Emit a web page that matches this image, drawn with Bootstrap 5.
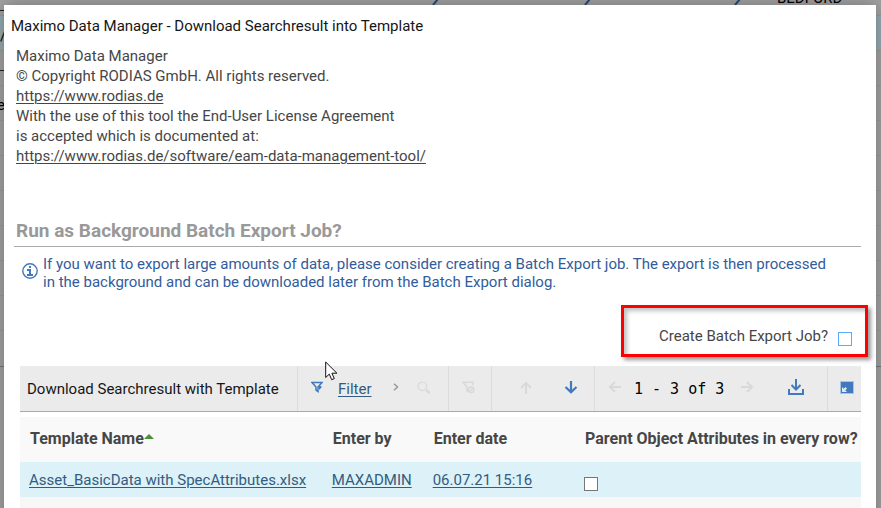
<!DOCTYPE html>
<html lang="en">
<head>
<meta charset="utf-8">
<meta name="viewport" content="width=device-width, initial-scale=1">
<title>Maximo Data Manager</title>
<link href="https://cdn.jsdelivr.net/npm/bootstrap@5.3.0/dist/css/bootstrap.min.css" rel="stylesheet">
<style>
  body { font-family: Roboto, "Noto Sans", sans-serif; font-size: 15px; line-height: 20px; color: #464646; background: #999; }
  a { color: #464646; text-underline-offset: 2px; text-decoration-thickness: 1px; }
  a:hover { color: #000; }
  .page-shell { padding: 5px 5px 0 4px; }
  .under-page { inset: 0; color: #000; background: #a2a2a2; }
  .under-page .strip { height: 35px; border-bottom: 1px solid #999; }
  .under-page .strip-first { height: 16px; }
  .under-page .strip-blue { background: #96abb2; }
  .under-page .strip-rule { height: 36px; border-bottom: 1px solid #777; }
  .under-text { position: absolute; line-height: 16px; }
  .u-bedford { left: 777px; top: -10px; }
  .u-slash { left: 0; top: 28px; }
  .u-e { left: -3px; top: 97px; }
  .u-chev { position: absolute; top: 0; }
  .u-c1 { left: 432px; } .u-c2 { left: 584px; } .u-c3 { left: 734px; }
  .u-line { position: absolute; left: 0; width: 4px; height: 1px; background: #222; }
  .u-l1 { top: 10px; } .u-l2 { top: 70px; }
  .dialog-box { background: #fff; min-height: calc(100vh - 5px); box-shadow: 0 0 16px rgba(0,0,0,.3); }
  .dialog-title { font-size: 15px; line-height: 20px; color: #161616; padding: 11px 7px 0; }
  .about { padding: 10px 12px 0; }
  .section-title { font-size: 19px; line-height: 24px; font-weight: 700; color: #999; margin: 53px 15px 0 10px; padding: 0 2px 3px; border-bottom: 1px solid #aaa; }
  .info { color: #325c9b; line-height: 18px; padding: 8px 24px 0 18px; gap: 5px; }
  .info svg { margin-top: 8px; }
  .job-box { border: 3px solid #f00; box-shadow: 3px 3px 4px rgba(0,0,0,.4), inset 3px 3px 4px rgba(0,0,0,.25); margin: 14px 8px 9px auto; width: 247px; height: 52px; padding: 9px 13px 0 0; gap: 10px; }
  .tick { appearance: none; width: 14px; height: 14px; border: 1px solid #777; background: #fff; margin: 0; flex: none; }
  .tick:checked { background: #4178be; }
  .job-box .tick { border-color: #5aaafa; margin-top: 6px; }
  .results { margin: 0 15px 0 16px; }
  .tools { background: #ebebeb; border-bottom: 1px solid #aaa; height: 46px; margin-bottom: 5px; color: #161616; }
  .tools > div { border-left: 1px solid #ddd; height: 45px; }
  .tools > .g-title { border-left: 0; padding-left: 7px; width: 277px; }
  .tools button { border: 0; background: none; padding: 0; line-height: 0; color: #4178be; }
  .tools button:disabled { color: #d9d9d9; }
  .tools svg { display: block; margin-bottom: 3px; }
  .g-filter { width: 151px; padding-left: 13px; }
  .g-filter a { color: #325c80; margin: 0 21px 0 15px; }
  .g-filter svg.sep { margin-right: 18px; }
  .g-clear { width: 43px; padding-right: 4px; } .g-nav { width: 103px; padding: 0 16px 0 27px; }
  .g-close { width: 34px; padding-left: 12px; }
  .g-page { padding: 0 23px 0 13px; }
  .page-count { font: 15px/20px "DejaVu Sans Mono", monospace; color: #000; margin: 0 17px 0 13px; white-space: pre; }
  .results table { table-layout: fixed; width: 100%; border-collapse: collapse; }
  .results th { background: #f9f9f9; height: 45px; padding: 0 0 1px 10px; font-size: 16px; font-weight: 700; white-space: nowrap; }
  .results td { background: #f7f7f7; height: 35px; padding: 0 0 0 9px; white-space: nowrap; }
  .results .picked td { background: #ddf1f8; }
  .results td a { color: #325c80; }
  .results td .tick { display: block; margin-top: 8px; }
  .sort { display: inline-block; border: 5px solid transparent; border-top: 0; border-bottom-color: #4b8f3c; vertical-align: 5px; }
  .c1 { width: 36%; } .c2 { width: 12%; } .c3 { width: 18%; } .c4 { width: 34%; }
  .pointer { position: absolute; left: 325px; top: 361px; }
</style>
<script src="https://cdn.jsdelivr.net/npm/bootstrap@5.3.0/dist/js/bootstrap.bundle.min.js"></script>
</head>
<body class="vh-100 overflow-hidden position-relative">

<div class="under-page position-absolute overflow-hidden" aria-hidden="true">
  <div class="strip strip-first"></div>
  <div class="strip strip-blue"></div>
  <div class="strip"></div><div class="strip"></div><div class="strip"></div><div class="strip"></div>
  <div class="strip"></div><div class="strip"></div><div class="strip"></div>
  <div class="strip"></div>
  <div class="strip strip-rule"></div>
  <span class="under-text u-bedford">BEDFORD</span>
  <span class="under-text u-slash">/</span>
  <span class="under-text u-e">e</span>
  <i class="u-line u-l1"></i><i class="u-line u-l2"></i>
  <svg class="u-chev u-c1" width="8" height="5"><path d="M1 5 6-1" stroke="#264a7c" stroke-width="2"/></svg>
  <svg class="u-chev u-c2" width="8" height="5"><path d="M1 5 6-1" stroke="#264a7c" stroke-width="2"/></svg>
  <svg class="u-chev u-c3" width="8" height="5"><path d="M1 5 6-1" stroke="#264a7c" stroke-width="2"/></svg>
</div>

<div class="page-shell position-relative">
<main class="dialog-box">
  <h1 class="dialog-title m-0 fw-normal">Maximo Data Manager - Download Searchresult into Template</h1>

  <div class="about">
    Maximo Data Manager<br>
    © Copyright RODIAS GmbH. All rights reserved.<br>
    <a href="https://www.rodias.de">https://www.rodias.de</a><br>
    With the use of this tool the End-User License Agreement<br>
    is accepted which is documented at:<br>
    <a href="https://www.rodias.de/software/eam-data-management-tool/">https://www.rodias.de/software/eam-data-management-tool/</a>
  </div>

  <h2 class="section-title">Run as Background Batch Export Job?</h2>

  <div class="info d-flex align-items-start">
    <svg class="flex-shrink-0" width="16" height="16" viewBox="0 0 16 16" fill="none" stroke="#4178be"><circle cx="8" cy="8" r="7.2" stroke-width="1.4"/><path d="M7 3h2v2H7zM5 6h4v5h2v2H5v-2h2V8H5z" fill="#4178be" stroke="none"/></svg>
    <div>If you want to export large amounts of data, please consider creating a Batch Export job. The export is then processed<br>in the background and can be downloaded later from the Batch Export dialog.</div>
  </div>

  <div class="job-box d-flex align-items-center justify-content-end">
    <label for="batchJob">Create Batch Export Job?</label>
    <input class="tick" type="checkbox" id="batchJob">
  </div>

  <section class="results">
    <div class="tools d-flex">
      <div class="g-title d-flex align-items-center text-nowrap">Download Searchresult with Template</div>
      <div class="g-filter d-flex align-items-center">
        <button type="button" aria-label="Filter table"><svg width="12" height="12" viewBox="0 0 12 12" fill="none" stroke="currentColor" stroke-width="1.5"><path d="M1 1.5h10L7 6v4.5L5 9V6z"/><path d="M8 4v5l3-3z" fill="currentColor" stroke="none"/></svg></button>
        <a href="#filter">Filter</a>
        <svg class="sep" width="6" height="8" viewBox="0 0 6 8" fill="none" stroke="#999" stroke-width="1.5"><path d="M1 .7 4.5 4 1 7.3"/></svg>
        <button type="button" disabled aria-label="Search"><svg width="13" height="13" viewBox="0 0 13 13" fill="none" stroke="currentColor" stroke-width="1.2"><circle cx="5.3" cy="5.3" r="4.3"/><path d="m9 9 3.5 3" stroke-width="2.5"/></svg></button>
      </div>
      <div class="g-clear d-flex align-items-center justify-content-center">
        <button type="button" disabled aria-label="Clear filter"><svg width="13" height="13" viewBox="0 0 13 13" fill="none" stroke="currentColor" stroke-width="1.5"><path d="M11 4V1.2H1L5 6v5"/><circle cx="9" cy="8.8" r="2.8"/><path d="m7 11 4-4"/></svg></button>
      </div>
      <div class="g-nav d-flex align-items-center justify-content-between">
        <button type="button" disabled aria-label="Previous row"><svg width="14" height="13" viewBox="0 0 14 13" fill="none" stroke="currentColor" stroke-width="2"><path d="M7 13V2M2 7l5-5 5 5"/></svg></button>
        <button type="button" aria-label="Next row"><svg width="14" height="13" viewBox="0 0 14 13" fill="none" stroke="currentColor" stroke-width="2.2"><path d="M7 0v11M1.5 6 7 11.3 12.500 6"/></svg></button>
      </div>
      <div class="g-page d-flex align-items-center flex-grow-1">
        <button type="button" disabled aria-label="Previous page"><svg width="13" height="12" viewBox="0 0 13 12" fill="none" stroke="currentColor" stroke-width="2"><path d="M13 6H2M7 1 2 6l5 5"/></svg></button>
        <span class="page-count">1 - 3 of 3</span>
        <button type="button" disabled aria-label="Next page"><svg width="13" height="12" viewBox="0 0 13 12" fill="none" stroke="currentColor" stroke-width="2"><path d="M0 6h11M6 1l5 5-5 5"/></svg></button>
        <button type="button" class="ms-auto" aria-label="Download"><svg width="16" height="16" viewBox="0 0 16 16" fill="none" stroke="currentColor" stroke-width="2"><path d="M8 0v10M3.500 6 8 10.500 12.500 6M1 10v5h14v-5"/></svg></button>
      </div>
      <div class="g-close d-flex align-items-center">
        <button type="button" aria-label="Collapse"><svg width="14" height="13" viewBox="0 0 14 13"><path d="M0 0h14v13H0z" fill="#a9c3e4"/><path d="M1 1h12v11H1z" fill="#4178be"/><path d="M2 6v5h5L5.300 9.300 7 7.500 5.500 6 3.700 7.700z" fill="#dce9f7"/></svg></button>
      </div>
    </div>

    <table>
      <thead>
        <tr>
          <th class="c1" scope="col">Template Name<span class="sort"></span></th>
          <th class="c2" scope="col">Enter by</th>
          <th class="c3" scope="col">Enter date</th>
          <th class="c4" scope="col" id="parentCol">Parent Object Attributes in every row?</th>
        </tr>
      </thead>
      <tbody>
        <tr class="picked">
          <td><a href="#template">Asset_BasicData with SpecAttributes.xlsx</a></td>
          <td><a href="#user">MAXADMIN</a></td>
          <td><a href="#date">06.07.21 15:16</a></td>
          <td><input class="tick" type="checkbox" aria-labelledby="parentCol"></td>
        </tr>
        <tr><td colspan="4"></td></tr>
      </tbody>
    </table>
  </section>
</main>
<svg class="pointer" width="13" height="20" viewBox="0 0 13 20" aria-hidden="true"><path d="M.7 1v15.500l3.600-3.400 2.400 5.600 2.600-1.100-2.400-5.400h5z" fill="#fff" stroke="#111"/></svg>
</div>
</body>
</html>
